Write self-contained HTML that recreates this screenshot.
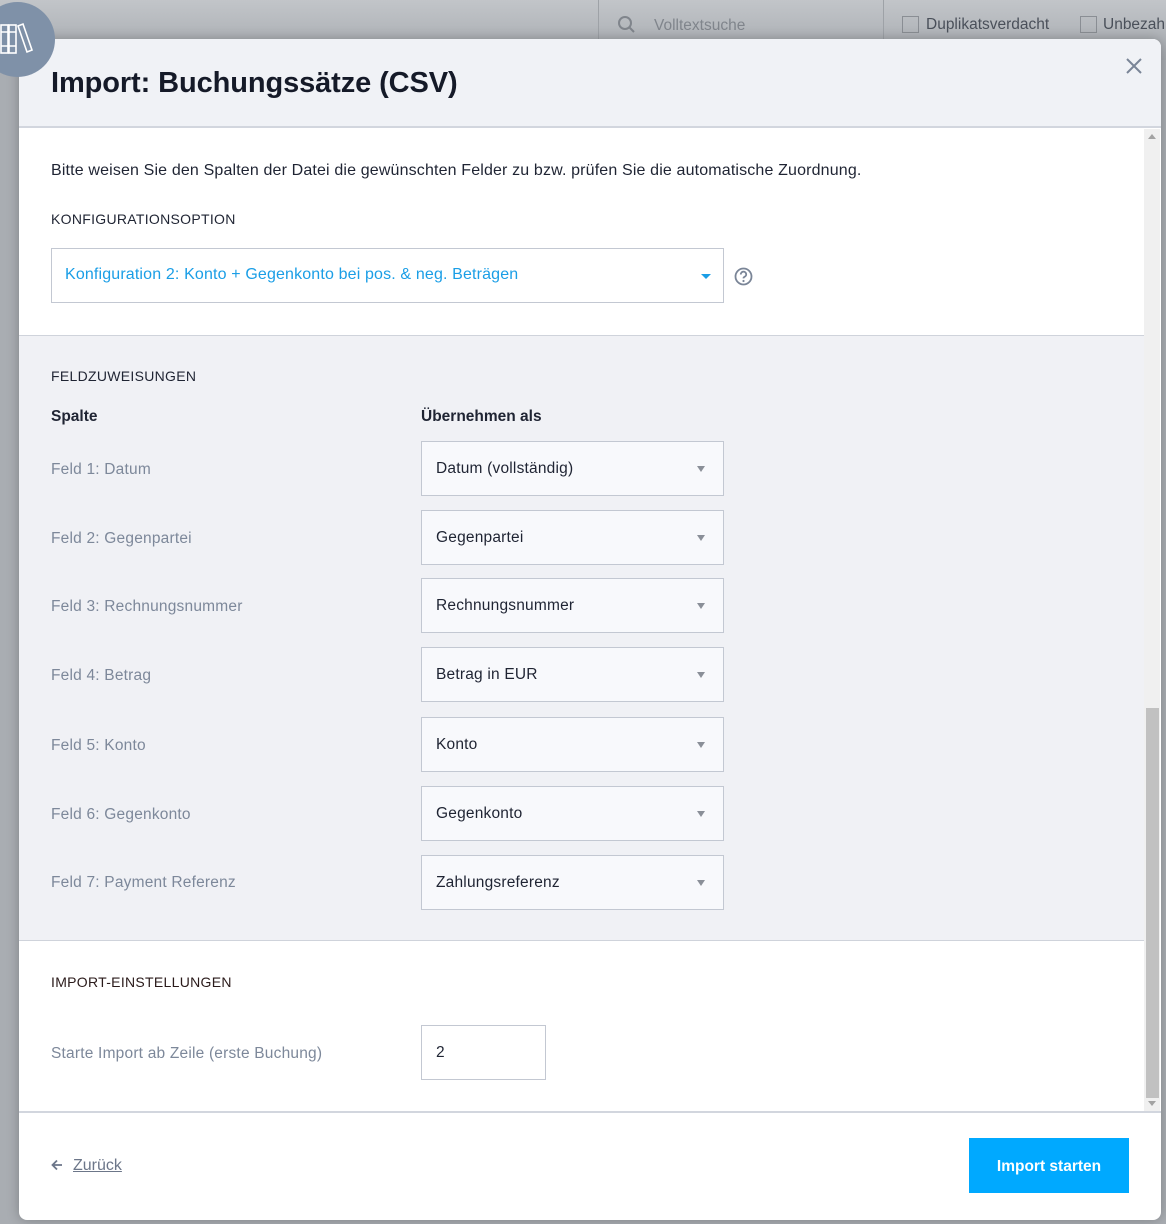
<!DOCTYPE html>
<html><head><meta charset="utf-8"><style>
*{box-sizing:border-box;margin:0;padding:0}
body{width:1166px;height:1224px;overflow:hidden;background:#a9adb2;font-family:"Liberation Sans",sans-serif;position:relative}
.bgtop{position:absolute;left:0;top:0;width:1166px;height:60px;background:linear-gradient(#c2c5c9,#a5a9ae)}
.abs{position:absolute}
.modal{position:absolute;left:19px;top:39px;width:1142px;height:1181px;background:#fff;border-radius:8px;overflow:hidden;box-shadow:0 0 12px rgba(0,0,0,.25)}
.hdr{position:absolute;left:0;top:0;width:1142px;height:89px;background:#f0f2f6;border-bottom:2px solid #d2d6de}
.t{position:absolute;white-space:nowrap}
.sel{position:absolute;left:402px;width:303px;height:55px;border:1px solid #c3c8d2;background:#f8f9fc;font-size:15.5px;color:#1f2433;padding:18px 0 0 14px;letter-spacing:0.2px}
.sel:after{content:"";position:absolute;right:18px;top:24px;border-left:4px solid transparent;border-right:4px solid transparent;border-top:6px solid #8a8f98}
.lab{position:absolute;left:32px;font-size:15.5px;color:#7d889a;letter-spacing:0.2px}
</style></head><body>
<div class="bgtop"></div>
<div class="abs" style="left:598px;top:0;width:1px;height:40px;background:#9ea2a7"></div>
<div class="abs" style="left:883px;top:0;width:1px;height:40px;background:#9ea2a7"></div>
<svg class="abs" style="left:617px;top:15px" width="20" height="20"><circle cx="8" cy="8" r="6" fill="none" stroke="#80858c" stroke-width="2"/><line x1="12.5" y1="12.5" x2="17" y2="17" stroke="#80858c" stroke-width="2"/></svg>
<div class="t" style="left:654px;top:17px;font-size:15.5px;color:#80858c">Volltextsuche</div>
<div class="abs" style="left:902px;top:16px;width:17px;height:17px;border:1px solid #8a8e94"></div>
<div class="t" style="left:926px;top:16px;font-size:15.5px;color:#4a505a">Duplikatsverdacht</div>
<div class="abs" style="left:1080px;top:16px;width:17px;height:17px;border:1px solid #8a8e94"></div>
<div class="t" style="left:1103px;top:16px;font-size:15.5px;color:#4a505a">Unbezahlt</div>
<div class="modal">
 <div class="hdr">
  <div class="t" style="left:32px;top:28px;font-size:29px;font-weight:600;color:#151a28;letter-spacing:-0.1px">Import: Buchungssätze (CSV)</div>
  <svg class="abs" style="left:1106px;top:18px" width="18" height="18"><path d="M2 2L16 16M16 2L2 16" stroke="#7a8597" stroke-width="2"/></svg>
 </div>
 <div class="t" style="left:32px;top:123px;font-size:16px;color:#1f2433;letter-spacing:0.15px">Bitte weisen Sie den Spalten der Datei die gewünschten Felder zu bzw. prüfen Sie die automatische Zuordnung.</div>
 <div class="t" style="left:32px;top:172px;font-size:14px;color:#1f2433;letter-spacing:0.3px">KONFIGURATIONSOPTION</div>
 <div class="abs" style="left:32px;top:209px;width:673px;height:55px;border:1px solid #c3c8d2;background:#fff"></div>
 <div class="t" style="left:46px;top:227px;font-size:16px;color:#1a9ee6;letter-spacing:0.15px">Konfiguration 2: Konto + Gegenkonto bei pos. &amp; neg. Beträgen</div>
 <div class="abs" style="left:682px;top:235px;border-left:5px solid transparent;border-right:5px solid transparent;border-top:5px solid #1a9ee6"></div>
 <svg class="abs" style="left:715px;top:228px" width="19" height="19"><circle cx="9.5" cy="9.5" r="8" fill="none" stroke="#7a8597" stroke-width="1.8"/><path d="M6.8 7.5a2.7 2.7 0 1 1 3.6 2.4c-.7.3-.9.7-.9 1.5" fill="none" stroke="#7a8597" stroke-width="1.8"/><circle cx="9.5" cy="14" r="1.1" fill="#7a8597"/></svg>
 <div class="abs" style="left:0;top:296px;width:1125px;height:606px;background:#f0f1f5;border-top:1px solid #cfd3db;border-bottom:1px solid #cfd3db"></div>
 <div class="t" style="left:32px;top:329px;font-size:14px;color:#1f2433;letter-spacing:0.3px">FELDZUWEISUNGEN</div>
 <div class="t" style="left:32px;top:369px;font-size:15.5px;font-weight:bold;color:#1f2433">Spalte</div>
 <div class="t" style="left:402px;top:369px;font-size:15.5px;font-weight:bold;color:#1f2433">Übernehmen als</div>
 <div class="lab" style="top:422px">Feld 1: Datum</div><div class="sel" style="top:402px">Datum (vollständig)</div>
 <div class="lab" style="top:491px">Feld 2: Gegenpartei</div><div class="sel" style="top:471px">Gegenpartei</div>
 <div class="lab" style="top:559px">Feld 3: Rechnungsnummer</div><div class="sel" style="top:539px">Rechnungsnummer</div>
 <div class="lab" style="top:628px">Feld 4: Betrag</div><div class="sel" style="top:608px">Betrag in EUR</div>
 <div class="lab" style="top:698px">Feld 5: Konto</div><div class="sel" style="top:678px">Konto</div>
 <div class="lab" style="top:767px">Feld 6: Gegenkonto</div><div class="sel" style="top:747px">Gegenkonto</div>
 <div class="lab" style="top:835px">Feld 7: Payment Referenz</div><div class="sel" style="top:816px">Zahlungsreferenz</div>
 <div class="t" style="left:32px;top:935px;font-size:14px;color:#2a1a1a;letter-spacing:0.3px">IMPORT-EINSTELLUNGEN</div>
 <div class="lab" style="top:1006px">Starte Import ab Zeile (erste Buchung)</div>
 <div class="abs" style="left:402px;top:986px;width:125px;height:55px;border:1px solid #c3c8d2;background:#fff;font-size:15.5px;color:#1f2433;padding:18px 0 0 14px">2</div>
 <div class="abs" style="left:1125px;top:90px;width:16px;height:982px;background:#f0f0f0"></div>
 <div class="abs" style="left:1127px;top:669px;width:13px;height:390px;background:#c1c1c1"></div>
 <div class="abs" style="left:1129px;top:95px;border-left:4px solid transparent;border-right:4px solid transparent;border-bottom:5px solid #a3a3a3"></div>
 <div class="abs" style="left:1129px;top:1062px;border-left:4px solid transparent;border-right:4px solid transparent;border-top:5px solid #a3a3a3"></div>
 <div class="abs" style="left:0;top:1072px;width:1142px;height:2px;background:#d2d6de"></div>
 <svg class="abs" style="left:32px;top:1120px" width="12" height="12"><path d="M11 6H2M6 1.5L1.5 6 6 10.5" fill="none" stroke="#6c7689" stroke-width="1.8"/></svg>
 <div class="t" style="left:54px;top:1118px;font-size:16px;color:#6c7689;text-decoration:underline">Zurück</div>
 <div class="abs" style="left:950px;top:1099px;width:160px;height:55px;background:#00a9ff;color:#fff;font-size:15.5px;font-weight:bold;text-align:center;line-height:57px">Import starten</div>
</div>
<div class="abs" style="left:-20px;top:2px;width:75px;height:75px;border-radius:50%;background:#7f91a8"></div>
<svg class="abs" style="left:0;top:22px" width="38" height="34"><g fill="none" stroke="#fff" stroke-width="1.6"><rect x="1" y="3" width="7" height="28"/><rect x="9" y="3" width="7" height="28"/><path d="M1 10h15M1 24h15"/><path d="M18 4l5-2 9 26-5 2z"/></g></svg>
</body></html>
